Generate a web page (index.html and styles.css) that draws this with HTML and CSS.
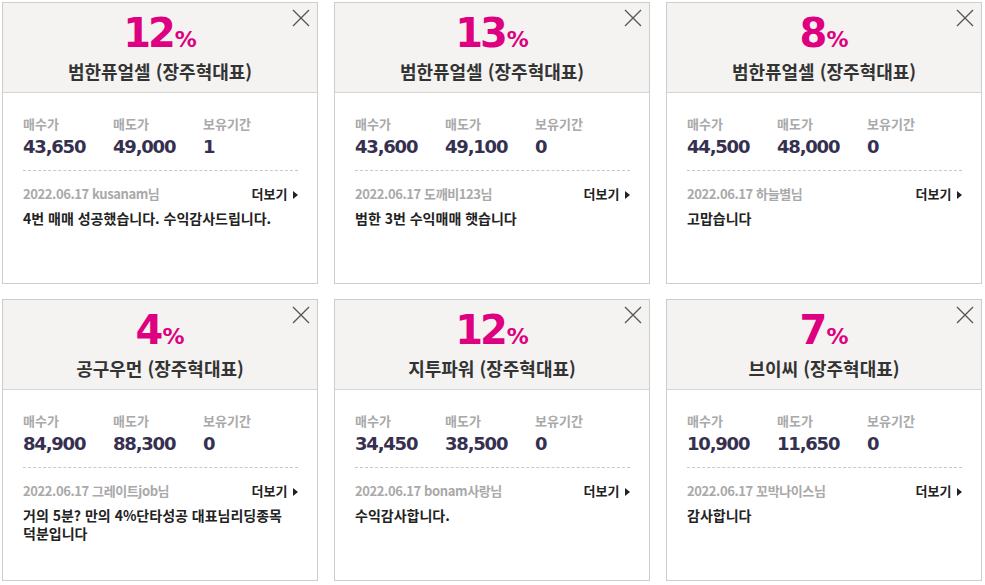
FILE: index.html
```html
<!DOCTYPE html>
<html lang="ko">
<head>
  <meta charset="UTF-8">
  <title>수익 인증 리스트</title>
  <link rel="stylesheet" href="styles.css">
</head>
<body>
  <div class="review-grid">

    <div class="review-card">
      <button class="close-btn" type="button" aria-label="닫기">
        <svg width="18" height="18" viewBox="0 0 18 18"><path d="M1 1L17 17M17 1L1 17"/></svg>
      </button>
      <div class="card-head">
        <div class="rate">12<span class="pct">%</span></div>
        <div class="stock">범한퓨얼셀 (장주혁대표)</div>
      </div>
      <div class="card-body">
        <div class="stats">
          <div class="stat"><div class="stat-label">매수가</div><div class="stat-value">43,650</div></div>
          <div class="stat"><div class="stat-label">매도가</div><div class="stat-value">49,000</div></div>
          <div class="stat"><div class="stat-label">보유기간</div><div class="stat-value">1</div></div>
        </div>
        <div class="meta">
          <span class="writer">2022.06.17 kusanam님</span>
          <a class="more" href="#">더보기 <svg width="5" height="8" viewBox="0 0 5 8"><path d="M0 0L5 4L0 8Z"/></svg></a>
        </div>
        <p class="comment">4번 매매 성공했습니다. 수익감사드립니다.</p>
      </div>
    </div>

    <div class="review-card">
      <button class="close-btn" type="button" aria-label="닫기">
        <svg width="18" height="18" viewBox="0 0 18 18"><path d="M1 1L17 17M17 1L1 17"/></svg>
      </button>
      <div class="card-head">
        <div class="rate">13<span class="pct">%</span></div>
        <div class="stock">범한퓨얼셀 (장주혁대표)</div>
      </div>
      <div class="card-body">
        <div class="stats">
          <div class="stat"><div class="stat-label">매수가</div><div class="stat-value">43,600</div></div>
          <div class="stat"><div class="stat-label">매도가</div><div class="stat-value">49,100</div></div>
          <div class="stat"><div class="stat-label">보유기간</div><div class="stat-value">0</div></div>
        </div>
        <div class="meta">
          <span class="writer">2022.06.17 도깨비123님</span>
          <a class="more" href="#">더보기 <svg width="5" height="8" viewBox="0 0 5 8"><path d="M0 0L5 4L0 8Z"/></svg></a>
        </div>
        <p class="comment">범한 3번 수익매매 햇습니다</p>
      </div>
    </div>

    <div class="review-card">
      <button class="close-btn" type="button" aria-label="닫기">
        <svg width="18" height="18" viewBox="0 0 18 18"><path d="M1 1L17 17M17 1L1 17"/></svg>
      </button>
      <div class="card-head">
        <div class="rate">8<span class="pct">%</span></div>
        <div class="stock">범한퓨얼셀 (장주혁대표)</div>
      </div>
      <div class="card-body">
        <div class="stats">
          <div class="stat"><div class="stat-label">매수가</div><div class="stat-value">44,500</div></div>
          <div class="stat"><div class="stat-label">매도가</div><div class="stat-value">48,000</div></div>
          <div class="stat"><div class="stat-label">보유기간</div><div class="stat-value">0</div></div>
        </div>
        <div class="meta">
          <span class="writer">2022.06.17 하늘별님</span>
          <a class="more" href="#">더보기 <svg width="5" height="8" viewBox="0 0 5 8"><path d="M0 0L5 4L0 8Z"/></svg></a>
        </div>
        <p class="comment">고맙습니다</p>
      </div>
    </div>

    <div class="review-card">
      <button class="close-btn" type="button" aria-label="닫기">
        <svg width="18" height="18" viewBox="0 0 18 18"><path d="M1 1L17 17M17 1L1 17"/></svg>
      </button>
      <div class="card-head">
        <div class="rate">4<span class="pct">%</span></div>
        <div class="stock">공구우먼 (장주혁대표)</div>
      </div>
      <div class="card-body">
        <div class="stats">
          <div class="stat"><div class="stat-label">매수가</div><div class="stat-value">84,900</div></div>
          <div class="stat"><div class="stat-label">매도가</div><div class="stat-value">88,300</div></div>
          <div class="stat"><div class="stat-label">보유기간</div><div class="stat-value">0</div></div>
        </div>
        <div class="meta">
          <span class="writer">2022.06.17 그레이트job님</span>
          <a class="more" href="#">더보기 <svg width="5" height="8" viewBox="0 0 5 8"><path d="M0 0L5 4L0 8Z"/></svg></a>
        </div>
        <p class="comment">거의 5분? 만의 4%단타성공 대표님리딩종목 덕분입니다</p>
      </div>
    </div>

    <div class="review-card">
      <button class="close-btn" type="button" aria-label="닫기">
        <svg width="18" height="18" viewBox="0 0 18 18"><path d="M1 1L17 17M17 1L1 17"/></svg>
      </button>
      <div class="card-head">
        <div class="rate">12<span class="pct">%</span></div>
        <div class="stock">지투파워 (장주혁대표)</div>
      </div>
      <div class="card-body">
        <div class="stats">
          <div class="stat"><div class="stat-label">매수가</div><div class="stat-value">34,450</div></div>
          <div class="stat"><div class="stat-label">매도가</div><div class="stat-value">38,500</div></div>
          <div class="stat"><div class="stat-label">보유기간</div><div class="stat-value">0</div></div>
        </div>
        <div class="meta">
          <span class="writer">2022.06.17 bonam사랑님</span>
          <a class="more" href="#">더보기 <svg width="5" height="8" viewBox="0 0 5 8"><path d="M0 0L5 4L0 8Z"/></svg></a>
        </div>
        <p class="comment">수익감사합니다.</p>
      </div>
    </div>

    <div class="review-card">
      <button class="close-btn" type="button" aria-label="닫기">
        <svg width="18" height="18" viewBox="0 0 18 18"><path d="M1 1L17 17M17 1L1 17"/></svg>
      </button>
      <div class="card-head">
        <div class="rate">7<span class="pct">%</span></div>
        <div class="stock">브이씨 (장주혁대표)</div>
      </div>
      <div class="card-body">
        <div class="stats">
          <div class="stat"><div class="stat-label">매수가</div><div class="stat-value">10,900</div></div>
          <div class="stat"><div class="stat-label">매도가</div><div class="stat-value">11,650</div></div>
          <div class="stat"><div class="stat-label">보유기간</div><div class="stat-value">0</div></div>
        </div>
        <div class="meta">
          <span class="writer">2022.06.17 꼬박나이스님</span>
          <a class="more" href="#">더보기 <svg width="5" height="8" viewBox="0 0 5 8"><path d="M0 0L5 4L0 8Z"/></svg></a>
        </div>
        <p class="comment">감사합니다</p>
      </div>
    </div>

  </div>
</body>
</html>
```

FILE: styles.css
```css
html, body {
  margin: 0;
  padding: 0;
  background: #fff;
  font-family: "Noto Sans CJK KR", "Noto Sans", sans-serif;
  color: #222;
}
body {
  padding: 2px;
}
.review-grid {
  display: grid;
  grid-template-columns: repeat(3, 316px);
  grid-auto-rows: 282px;
  column-gap: 16px;
  row-gap: 15px;
}
.review-card {
  position: relative;
  border: 1px solid #cdcdcd;
  background: #fff;
  box-sizing: border-box;
  display: flex;
  flex-direction: column;
}
.close-btn {
  position: absolute;
  top: 6px;
  right: 7px;
  width: 18px;
  height: 18px;
  padding: 0;
  border: none;
  background: none;
  cursor: pointer;
}
.close-btn svg {
  display: block;
}
.close-btn path {
  stroke: #555;
  stroke-width: 1.3;
  fill: none;
}
.card-head {
  height: 90px;
  box-sizing: border-box;
  padding-top: 8px;
  background: #f4f3f1;
  border-bottom: 1px solid #d6d6d6;
  text-align: center;
}
.rate {
  font-family: "DejaVu Sans", Verdana, sans-serif;
  font-size: 40px;
  line-height: 44px;
  font-weight: bold;
  letter-spacing: -3px;
  color: #de0080;
}
.rate .pct {
  font-size: 22px;
  line-height: 0;
  letter-spacing: 0;
  margin-left: 2px;
}
.stock {
  margin-top: 5px;
  font-size: 18px;
  line-height: 22px;
  font-weight: bold;
  color: #333;
}
.card-body {
  padding: 23px 19px 0 20px;
}
.stats {
  display: flex;
  padding-bottom: 11px;
  border-bottom: 1px dashed #c8c8c8;
}
.stat {
  width: 90px;
}
.stat-label {
  font-size: 13px;
  line-height: 16px;
  font-weight: bold;
  color: #a9a9a9;
}
.stat-value {
  margin-top: 3px;
  font-family: "DejaVu Sans", Verdana, sans-serif;
  font-size: 18px;
  line-height: 24px;
  font-weight: bold;
  letter-spacing: -1.2px;
  color: #363050;
}
.meta {
  display: flex;
  justify-content: space-between;
  align-items: center;
  margin-top: 14px;
  font-size: 13px;
  line-height: 18px;
  font-weight: bold;
}
.writer {
  color: #a9a9a9;
  letter-spacing: -0.4px;
}
.more {
  color: #222;
  text-decoration: none;
}
.more svg {
  margin-left: 2px;
  vertical-align: 0;
}
.more path {
  fill: #222;
}
.comment {
  margin: 6px 0 0;
  font-size: 14px;
  line-height: 18px;
  font-weight: bold;
  color: #222;
  word-break: keep-all;
}
```
